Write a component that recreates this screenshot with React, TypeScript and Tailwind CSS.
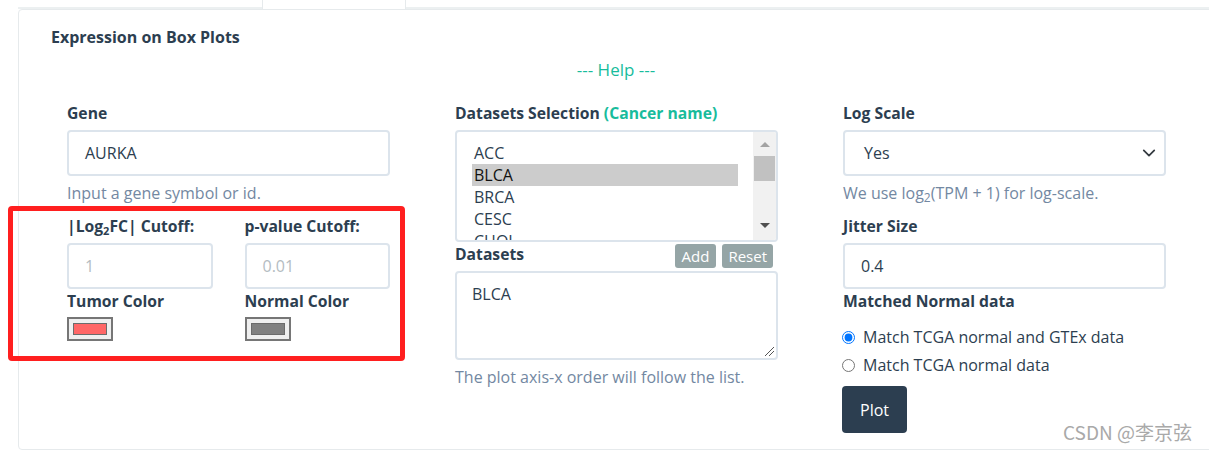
import React from "react";

const font = { fontFamily: '"Open Sans", "Noto Sans CJK SC", sans-serif' };

function Label({ children, className = "" }: { children: React.ReactNode; className?: string }) {
  return <div className={`text-[15.7px] leading-[20px] font-bold text-[#2c3e50] ${className}`}>{children}</div>;
}

function Help({ children, className = "" }: { children: React.ReactNode; className?: string }) {
  return <div className={`text-[16px] leading-[20px] text-[#7388a2] ${className}`}>{children}</div>;
}

function Swatch({ color }: { color: string }) {
  return (
    <div className="w-[46px] h-[24px] border-2 border-[#767676] bg-[#efefef] flex items-center justify-center">
      <div className="w-[34px] h-[12px] border border-[#6b6b6b]" style={{ background: color }} />
    </div>
  );
}

export default function App() {
  const items = ["ACC", "BLCA", "BRCA", "CESC", "CHOL"];
  return (
    <div className="relative w-[1209px] h-[450px] bg-white overflow-hidden" style={font}>
      {/* tab bar */}
      <div className="flex h-[9px] pl-[18px]">
        <div className="w-[244px] border-b-2 border-[#ecf0f1]" />
        <div className="w-[144px] border-x border-[#e6eaec]" />
        <div className="flex-1 border-b-2 border-[#ecf0f1]" />
      </div>
      {/* card */}
      <div className="ml-[18px] w-[1220px] h-[441px] border border-[#e6eaec] rounded-l-[4px] pl-[32px] pt-[16px]">
        <div className="text-[16px] leading-[22px] font-bold text-[#2c3e50]">Expression on Box Plots</div>
        <div className="mt-[11px] w-[1130px] text-center text-[17px] leading-[22px] text-[#18bc9c]">
          --- Help ---
        </div>
        <div className="flex pl-[16px] mt-[22px] gap-[65px]">
          {/* column 1 */}
          <div className="w-[323px]">
            <Label>Gene</Label>
            <div className="mt-[7px] h-[46px] border-2 border-[#dce4ec] rounded-[4px] flex items-center pl-[16px] text-[16px] text-[#2c3e50]">
              AURKA
            </div>
            <Help className="mt-[7px]">Input a gene symbol or id.</Help>
            <div className="mt-[13px] flex gap-[32px]">
              <div className="w-[146px]">
                <Label>
                  |Log<sub className="text-[11px] align-baseline relative top-[3px]">2</sub>FC| Cutoff:
                </Label>
                <div className="mt-[7px] h-[46px] border-2 border-[#dce4ec] rounded-[4px] flex items-center pl-[16px] text-[16px] text-[#b4bcc2]">
                  1
                </div>
                <Label className="mt-[2px]">Tumor Color</Label>
                <div className="mt-[6px]">
                  <Swatch color="#ff6666" />
                </div>
              </div>
              <div className="w-[146px]">
                <Label>p-value Cutoff:</Label>
                <div className="mt-[7px] h-[46px] border-2 border-[#dce4ec] rounded-[4px] flex items-center pl-[16px] text-[16px] text-[#b4bcc2]">
                  0.01
                </div>
                <Label className="mt-[2px]">Normal Color</Label>
                <div className="mt-[6px]">
                  <Swatch color="#808080" />
                </div>
              </div>
            </div>
          </div>

          {/* column 2 */}
          <div className="w-[323px]">
            <Label>
              Datasets Selection <span className="text-[#18bc9c]">(Cancer name)</span>
            </Label>
            <div className="mt-[7px] h-[112px] border-2 border-[#dce4ec] rounded-[4px] flex overflow-hidden">
              <div className="flex-1 pl-[15px] pt-[10px] pr-[15px] overflow-hidden">
                {items.map((it) => (
                  <div
                    key={it}
                    className={`h-[22px] leading-[22px] text-[16px] pl-[2px] ${it === "BLCA" ? "bg-[#cccccc] text-[#111]" : "text-[#2c3e50]"}`}
                  >
                    {it}
                  </div>
                ))}
              </div>
              <div className="w-[23px] bg-[#f1f1f1] flex flex-col items-center">
                <svg width="12" height="20" viewBox="0 0 12 20" className="mt-[4px]">
                  <path d="M1 11 L6 6 L11 11 Z" fill="#a3a3a3" />
                </svg>
                <div className="w-[21px] h-[25px] bg-[#c1c1c1]" />
                <div className="flex-1" />
                <svg width="12" height="20" viewBox="0 0 12 20" className="mb-[6px]">
                  <path d="M1 9 L6 14 L11 9 Z" fill="#505050" />
                </svg>
              </div>
            </div>
            <div className="flex items-start justify-between">
              <Label className="mt-[2px]">Datasets</Label>
              <div className="flex gap-[6px] pr-[5px] mt-[2px]">
                <div className="h-[24px] px-[7px] bg-[#95a5a6] rounded-[3px] text-white text-[15px] leading-[24px]">Add</div>
                <div className="h-[24px] px-[6px] bg-[#95a5a6] rounded-[3px] text-white text-[15px] leading-[24px]">Reset</div>
              </div>
            </div>
            <div className="relative mt-[3px] h-[89px] border-2 border-[#dce4ec] rounded-[4px] pl-[15px] pt-[10px] text-[16px] leading-[22px] text-[#2c3e50]">
              BLCA
              <svg width="12" height="12" viewBox="0 0 12 12" className="absolute right-[1px] bottom-[1px]">
                <path d="M11 2 L2 11 M11 6 L6 11" stroke="#555" strokeWidth="1" />
              </svg>
            </div>
            <Help className="mt-[7px]">The plot axis-x order will follow the list.</Help>
          </div>

          {/* column 3 */}
          <div className="w-[323px]">
            <Label>Log Scale</Label>
            <div className="mt-[7px] h-[46px] border-2 border-[#dce4ec] rounded-[4px] flex items-center justify-between pl-[19px] pr-[8px] text-[16px] text-[#2c3e50]">
              <span>Yes</span>
              <svg width="14" height="14" viewBox="0 0 16 16">
                <path d="M2 5 L8 11 L14 5" fill="none" stroke="#343a40" strokeWidth="2" strokeLinecap="round" strokeLinejoin="round" />
              </svg>
            </div>
            <div className="mt-[7px] text-[16px] leading-[20px] text-[#7388a2]">
              We use log<sub className="text-[12px] align-baseline relative top-[3px]">2</sub>(TPM + 1) for log-scale.
            </div>
            <Label className="mt-[13px]">Jitter Size</Label>
            <div className="mt-[7px] h-[46px] border-2 border-[#dce4ec] rounded-[4px] flex items-center pl-[16px] text-[16px] text-[#2c3e50]">
              0.4
            </div>
            <Label className="mt-[2px]">Matched Normal data</Label>
            <div className="mt-[16px] flex items-center gap-[8px] h-[20px] text-[16px] text-[#2c3e50]">
              <input type="radio" name="m" defaultChecked className="m-0 w-[13px] h-[13px] -ml-[1px]" />
              <span>Match TCGA normal and GTEx data</span>
            </div>
            <div className="mt-[8px] flex items-center gap-[8px] h-[20px] text-[16px] text-[#2c3e50]">
              <input type="radio" name="m" className="m-0 w-[13px] h-[13px] -ml-[1px]" />
              <span>Match TCGA normal data</span>
            </div>
            <div className="mt-[11px] -ml-[1px] w-[65px] h-[47px] bg-[#2c3e50] rounded-[4px] flex items-center justify-center text-white text-[16px]">
              Plot
            </div>
          </div>
        </div>
      </div>

      {/* annotation box */}
      <div className="absolute left-[8px] top-[206px] w-[397px] h-[155px] border-[5px] border-[#ff1f1f] rounded-[4px]" />

      {/* watermark */}
      <div className="absolute left-[1063px] top-[419px] text-[19px] leading-[26px] text-[#a0a0a0] opacity-90" style={{ fontFamily: '"Noto Sans CJK SC", sans-serif' }}>
        CSDN @李京弦
      </div>
    </div>
  );
}
